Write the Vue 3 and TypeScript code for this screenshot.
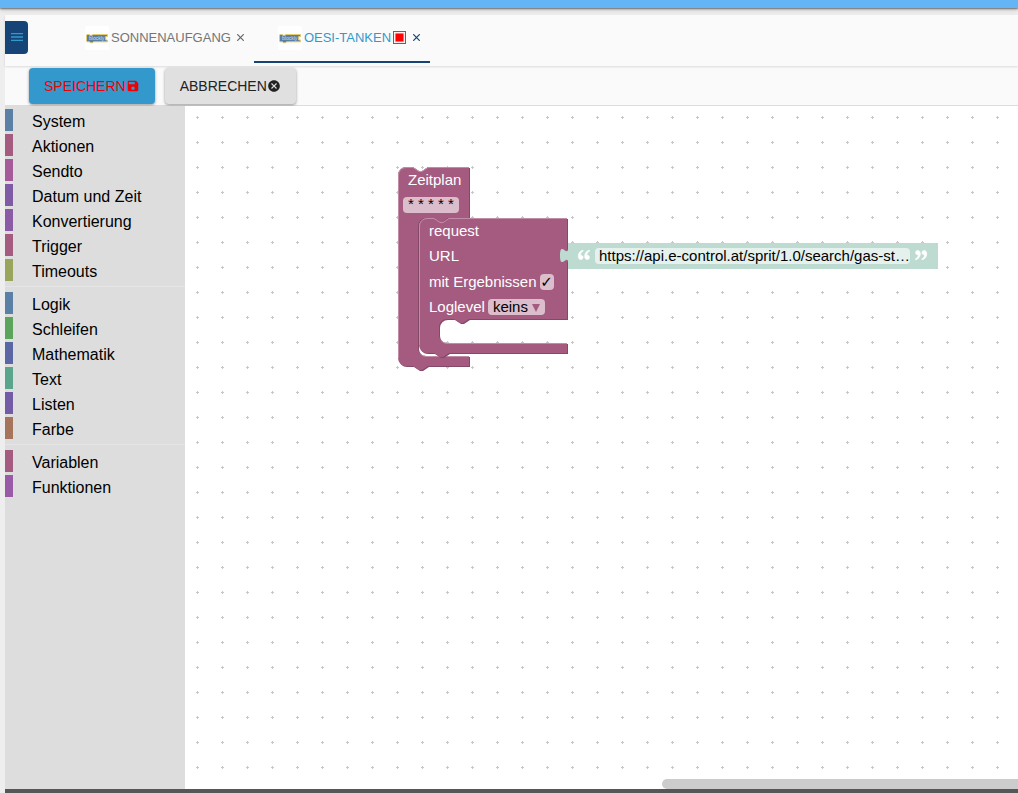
<script setup lang="ts">
import { ref } from 'vue'

interface Category {
  name: string
  color: string
}

const groups: Category[][] = [
  [
    { name: 'System', color: '#5b80a5' },
    { name: 'Aktionen', color: '#a55b80' },
    { name: 'Sendto', color: '#a55b99' },
    { name: 'Datum und Zeit', color: '#805ba5' },
    { name: 'Konvertierung', color: '#8c5ba5' },
    { name: 'Trigger', color: '#a55b80' },
    { name: 'Timeouts', color: '#99a55b' },
  ],
  [
    { name: 'Logik', color: '#5b80a5' },
    { name: 'Schleifen', color: '#5ba55b' },
    { name: 'Mathematik', color: '#5b67a5' },
    { name: 'Text', color: '#5ba58c' },
    { name: 'Listen', color: '#745ba5' },
    { name: 'Farbe', color: '#a5745b' },
  ],
  [
    { name: 'Variablen', color: '#a55b80' },
    { name: 'Funktionen', color: '#995ba5' },
  ],
]

const tabs = [
  { name: 'SONNENAUFGANG', active: false },
  { name: 'OESI-TANKEN', active: true },
]

const cron = ref('* * * * *')
const url = ref('https://api.e-control.at/sprit/1.0/search/gas-st…')
const withResults = ref(true)
const logLevel = ref('keins')
</script>

<template>
  <div class="app">
    <header class="appbar"></header>
    <main class="panel">
      <div class="tabbar">
        <button class="menu" type="button" aria-label="Menü">
          <svg width="12" height="8" viewBox="0 0 12 8"><path d="M0 .5h12M0 4h12M0 7.5h12" /></svg>
        </button>
        <nav class="tabs">
          <div v-for="tab in tabs" :key="tab.name" class="tab" :class="{ active: tab.active }">
            <button class="tab-label" type="button">
              <svg class="logo" width="24" height="24" viewBox="0 0 24 24">
                <rect width="24" height="24" rx="2" fill="#fff" />
                <path d="M2.500 8.500H4l1 .8h2l1-.8h14.500v2h-1.800v3.500h1.800v1.800H8.500l-1 1h-2l-1-1h-2a1 1 0 0 1-1-1V9.500a1 1 0 0 1 1-1z" fill="#5b80a5" stroke="#e3cb6b" />
                <text x="4" y="14">blockly</text>
              </svg>
              <span>{{ tab.name }}</span>
              <svg v-if="tab.active" class="changed" width="13" height="13" viewBox="0 0 13 13">
                <rect x=".5" y=".5" width="12" height="12" fill="#fff" stroke="#f22" />
                <rect x="1.500" y="1.500" width="10" height="10" fill="#ffd8d8" />
                <rect x="2.500" y="2.500" width="8" height="8" fill="#f00" />
              </svg>
            </button>
            <button class="close" type="button" aria-label="Schließen">
              <svg width="7" height="7" viewBox="0 0 7 7"><path d="M.2 .2l6.600 6.600M6.800 .2L.2 6.800" /></svg>
            </button>
          </div>
        </nav>
      </div>

      <div class="toolbar">
        <button class="btn save" type="button">
          SPEICHERN
          <svg width="14" height="14" viewBox="0 0 24 24"><path d="M17 3H5c-1.110 0-2 .9-2 2v14c0 1.100.89 2 2 2h14c1.100 0 2-.9 2-2V7l-4-4zm-5 16c-1.660 0-3-1.340-3-3s1.340-3 3-3 3 1.340 3 3-1.340 3-3 3zm3-10H5V5h10v4z" /></svg>
        </button>
        <button class="btn cancel" type="button">
          ABBRECHEN
          <svg width="14" height="14" viewBox="0 0 24 24"><path d="M12 2C6.470 2 2 6.470 2 12s4.470 10 10 10 10-4.470 10-10S17.530 2 12 2zm5 13.590L15.590 17 12 13.410 8.410 17 7 15.590 10.590 12 7 8.410 8.410 7 12 10.590 15.590 7 17 8.410 13.410 12 17 15.590z" /></svg>
        </button>
      </div>

      <div class="editor">
        <aside class="toolbox">
          <ul v-for="(group, i) in groups" :key="i">
            <li v-for="cat in group" :key="cat.name">
              <button class="category" type="button" :style="{ borderLeftColor: cat.color }">{{ cat.name }}</button>
            </li>
          </ul>
        </aside>

        <section class="canvas">
          <svg class="grid" width="100%" height="100%">
            <defs>
              <pattern id="dots" width="25" height="25" patternUnits="userSpaceOnUse">
                <path d="M11 11.500h3M12.500 10v3" stroke="#c8c8c8" />
              </pattern>
            </defs>
            <rect width="100%" height="100%" fill="url(#dots)" />
          </svg>

          <div class="block schedule">
            <svg class="shape" width="74" height="206" viewBox="0 0 74 206">
              <path class="dark" transform="translate(1,1)" d="M0 8A8 8 0 0 1 8 0H15l6 4h3l6-4H71V51H50l-6 4h-3l-6-4H28a8 8 0 0 0-8 8V181a8 8 0 0 0 8 8H71V199H30l-6 4h-3l-6-4H8a8 8 0 0 1-8-8z" />
              <path class="fill" d="M0 8A8 8 0 0 1 8 0H15l6 4h3l6-4H71V51H50l-6 4h-3l-6-4H28a8 8 0 0 0-8 8V181a8 8 0 0 0 8 8H71V199H30l-6 4h-3l-6-4H8a8 8 0 0 1-8-8z" />
              <path class="light" d="M.5 191V8A7.500 7.500 0 0 1 8 .5H15l6 4h3l6-4H71M22.500 187a8 8 0 0 0 5.500 2.500H71" />
            </svg>
            <label class="row" for="cron">Zeitplan</label>
            <div class="row second"><input id="cron" v-model="cron" class="field cron" type="text" /></div>
          </div>

          <div class="block request">
            <svg class="shape" width="151" height="142" viewBox="0 0 151 142">
              <path class="dark" transform="translate(1,1)" d="M0 8A8 8 0 0 1 8 0H15l6 4h3l6-4H148V101H50l-6 4h-3l-6-4H28a8 8 0 0 0-8 8V117a8 8 0 0 0 8 8H148V135H30l-6 4h-3l-6-4H8a8 8 0 0 1-8-8z" />
              <path class="fill" d="M0 8A8 8 0 0 1 8 0H15l6 4h3l6-4H148V101H50l-6 4h-3l-6-4H28a8 8 0 0 0-8 8V117a8 8 0 0 0 8 8H148V135H30l-6 4h-3l-6-4H8a8 8 0 0 1-8-8z" />
              <path class="light" d="M.5 127V8A7.500 7.500 0 0 1 8 .5H15l6 4h3l6-4H148M22.500 123a8 8 0 0 0 5.500 2.500H148" />
            </svg>
            <div class="row">request</div>
            <label class="row" for="url">URL</label>
            <div class="row options">
              <label for="results">mit Ergebnissen</label>
              <input id="results" v-model="withResults" class="check" type="checkbox" />
            </div>
            <div class="row">
              <label for="level">Loglevel</label>
              <span class="drop">
                <select id="level" v-model="logLevel" class="field">
                  <option>keins</option>
                  <option>info</option>
                  <option>debug</option>
                </select>
                <svg width="8" height="8" viewBox="0 0 8 8"><path d="M0 0h8L4 8z" /></svg>
              </span>
            </div>
          </div>

          <div class="block literal">
            <svg class="plug" width="9" height="16" viewBox="0 0 9 16"><path d="M9 0H8C8 10 0-8 0 7.500S8 5 8 15h1z" /></svg>
            <svg class="quote" width="12" height="10" viewBox="0 0 12 10">
              <path d="M5 .2C2 1 .3 3.200.3 6.200.3 8.300 1.300 9.500 2.800 9.500 4.100 9.500 5 8.600 5 7.400 5 6.200 4.200 5.300 3 5.300h-.7C2.400 3.400 3.300 2 5.200 1.100zM11.400.2c-3 .8-4.700 3-4.700 6 0 2.100 1 3.300 2.500 3.300 1.300 0 2.200-.9 2.200-2.100 0-1.200-.8-2.100-2-2.100h-.7c.1-1.900 1-3.300 2.900-4.200z" />
            </svg>
            <input id="url" v-model="url" class="field url" type="text" />
            <svg class="quote" width="12" height="10" viewBox="0 0 12 10">
              <g transform="rotate(180 6 5)">
                <path d="M5 .2C2 1 .3 3.200.3 6.200.3 8.300 1.300 9.500 2.800 9.500 4.100 9.500 5 8.600 5 7.400 5 6.200 4.200 5.300 3 5.300h-.7C2.400 3.400 3.300 2 5.200 1.100zM11.400.2c-3 .8-4.700 3-4.700 6 0 2.100 1 3.300 2.500 3.300 1.300 0 2.200-.9 2.200-2.100 0-1.200-.8-2.100-2-2.100h-.7c.1-1.900 1-3.300 2.900-4.200z" />
              </g>
            </svg>
          </div>

          <div class="scrollbar"></div>
        </section>
      </div>
    </main>
  </div>
</template>

<style>
body {
  background: #eee;
}
</style>

<style scoped>
.app {
  display: flex;
  flex-direction: column;
  height: 100vh;
  overflow: hidden;
  font-family: "Liberation Sans", Arial, sans-serif;
}
button,
input,
select {
  margin: 0;
  padding: 0;
  border: 0;
  border-radius: 0;
  background: none;
  color: inherit;
  font: inherit;
}
svg {
  flex: none;
}
.appbar {
  flex: none;
  height: 8px;
  background: #64b5f6;
  box-shadow: 0 1px 2px rgba(0, 0, 0, 0.5), 0 2px 5px rgba(0, 0, 0, 0.15);
}
.panel {
  display: flex;
  flex: 1;
  flex-direction: column;
  min-height: 0;
  margin: 7px 0 0 5px;
  background: #fafafa;
  border-bottom: 4px solid #565656;
}
.tabbar {
  display: flex;
  flex: none;
  gap: 33px;
  height: 48px;
  border-bottom: 3px solid #fafafa;
  box-shadow: 0 1px 2px rgba(0, 0, 0, 0.12);
}
.menu {
  display: flex;
  align-items: center;
  justify-content: center;
  width: 23px;
  height: 33px;
  margin-top: 6px;
  padding-bottom: 2px;
  border-radius: 0 4px 4px 0;
  background: #164477;
}
.menu svg {
  fill: none;
  stroke: #39c;
  stroke-width: 1.3;
}
.tabs {
  display: flex;
}
.tab {
  display: flex;
  align-items: center;
  gap: 6px;
  padding: 0 10px 1px 24px;
  border-bottom: 2px solid transparent;
  color: #757575;
  font-size: 13px;
}
.tab.active {
  border-color: #164477;
  color: #39c;
}
.tab-label {
  display: flex;
  align-items: center;
}
.logo {
  margin-right: 2px;
}
.changed {
  margin: 0 1px 0 2px;
}
.logo text {
  fill: #d8dfe8;
  font-size: 5px;
}
.close {
  display: flex;
}
.close svg {
  fill: none;
  stroke: #666;
  stroke-width: 1.2;
}
.active .close svg {
  stroke: #164477;
}
.toolbar {
  display: flex;
  flex: none;
  gap: 10px;
  margin-top: 2px;
  padding: 0 24px 1px;
  border-bottom: 1px solid #ddd;
}
.btn {
  display: flex;
  align-items: center;
  height: 36px;
  padding: 0 15px;
  border-radius: 4px;
  box-shadow: 0 1px 3px rgba(0, 0, 0, 0.4);
  font-size: 14px;
}
.btn svg {
  fill: currentColor;
}
.save {
  background: #39c;
  color: #f00000;
}
.cancel {
  background: #e0e0e0;
  color: #222;
}
.editor {
  display: flex;
  flex: 1;
  min-height: 0;
}
.toolbox {
  flex: none;
  width: 180px;
  padding-top: 3px;
  box-sizing: border-box;
  background: #ddd;
}
ul {
  margin: 0;
  padding: 0;
  list-style: none;
}
ul + ul {
  margin-top: 5px;
  padding-top: 5px;
  border-top: 1px solid #e5e5e5;
}
.category {
  display: block;
  width: 100%;
  height: 22px;
  margin-bottom: 3px;
  padding: 3px 0 0 19px;
  border-left: 8px solid;
  color: #000;
  font-size: 16px;
  line-height: 20px;
  text-align: left;
}
.canvas {
  position: relative;
  flex: 1;
  overflow: hidden;
  background: #fff;
}
.grid {
  position: absolute;
  inset: 0;
}
.block {
  position: absolute;
  color: #fff;
  font-size: 15px;
}
.shape {
  position: absolute;
  top: 0;
  left: 0;
  z-index: -1;
}
.dark {
  fill: #844966;
}
.fill {
  fill: #a55b80;
}
.light {
  fill: none;
  stroke: #c08ca6;
}
.row {
  display: flex;
  align-items: center;
  gap: 3px;
  height: 25px;
  white-space: nowrap;
}
.schedule {
  top: 61px;
  left: 213px;
  z-index: 1;
  padding: 0 10px;
}
.second {
  margin-left: -5px;
}
.request {
  top: 112px;
  left: 234px;
  z-index: 2;
  padding: 0 10px;
}
.options {
  margin-top: 1px;
}
.field {
  height: 16px;
  padding: 0 5px;
  border-radius: 4px;
  box-sizing: border-box;
  background: #dbbdcc;
  color: #000;
  line-height: 16px;
}
.cron {
  width: 56px;
  padding-bottom: 2px;
}
.check {
  display: flex;
  align-items: center;
  justify-content: center;
  width: 14px;
  height: 16px;
  border-radius: 4px;
  background: #dbbdcc;
  color: #000;
  appearance: none;
}
.check:checked::before {
  content: "✓";
  font: bold 15px/16px "DejaVu Sans", sans-serif;
}
.drop {
  position: relative;
  display: flex;
}
.drop select {
  width: 57px;
  appearance: none;
}
.drop svg {
  position: absolute;
  top: 5px;
  right: 5px;
  fill: #a55b80;
  pointer-events: none;
}
.literal {
  top: 137px;
  left: 383px;
  z-index: 3;
  display: flex;
  align-items: center;
  gap: 5px;
  height: 26px;
  padding: 0 11px 0 10px;
  background: #bddbd1;
}
.plug {
  position: absolute;
  top: 5px;
  left: -8px;
  fill: #bddbd1;
}
.quote {
  margin-bottom: 3px;
  overflow: visible;
  fill: #fff;
  stroke: #fff;
  stroke-width: 0.7;
}
.url {
  width: 315px;
  padding: 0 0 0 4px;
  background: #e5f1ed;
}
.scrollbar {
  position: absolute;
  right: 0;
  bottom: 0;
  left: 477px;
  height: 10px;
  border-radius: 5px 0 0 5px;
  background: #ccc;
}
</style>
